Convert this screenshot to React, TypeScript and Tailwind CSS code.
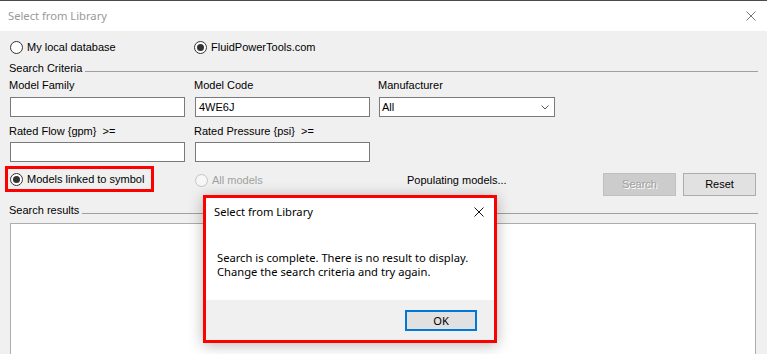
import React from "react";

const Radio = ({ checked, disabled }: { checked?: boolean; disabled?: boolean }) => (
  <span
    className={`shrink-0 w-[13px] h-[13px] rounded-full border flex items-center justify-center ${
      disabled ? "border-[#c4c4c4] bg-[#f7f7f7]" : "border-[#333333] bg-white"
    }`}
  >
    {checked && <span className="w-[7px] h-[7px] rounded-full bg-[#333333]" />}
  </span>
);

const XIcon = ({ color }: { color: string }) => (
  <svg width="10" height="10" viewBox="0 0 10 10" className="shrink-0">
    <path d="M0.5 0.5 L9.5 9.5 M9.5 0.5 L0.5 9.5" stroke={color} strokeWidth="1" fill="none" />
  </svg>
);

export default function App() {
  return (
    <div className="w-[767px] h-[354px] overflow-hidden relative bg-[#f0f0f0] font-['Liberation_Sans',Arial,sans-serif] text-[11px] leading-[13px] text-black flex flex-col">
      {/* Title bar */}
      <div className="h-[31px] shrink-0 bg-white border-t border-[#4a4a4a] flex items-center justify-between pl-[8px] pr-[11px]">
        <span className="font-['Noto_Sans',sans-serif] text-[11.2px] leading-[16px] text-[#999999]">
          Select from Library
        </span>
        <XIcon color="#777777" />
      </div>

      <div className="flex-1 flex flex-col pl-[10px] pr-[11px]">
        {/* Source radios */}
        <div className="mt-[9px] h-[14px] flex items-center">
          <div className="w-[184px] flex items-center gap-[4px]">
            <Radio />
            <span>My local database</span>
          </div>
          <div className="flex items-center gap-[4px]">
            <Radio checked />
            <span>FluidPowerTools.com</span>
          </div>
        </div>

        {/* Search criteria header */}
        <div className="mt-[8px] h-[13px] flex items-start">
          <span className="ml-[-1px]">Search Criteria</span>
          <div className="flex-1 h-px bg-[#a0a0a0] mt-[9px] ml-[3px] mr-[-2px]" />
        </div>

        {/* Labels row 1 */}
        <div className="mt-[4px] h-[13px] flex">
          <span className="w-[185px] ml-[-1px]">Model Family</span>
          <span className="w-[184px]">Model Code</span>
          <span>Manufacturer</span>
        </div>

        {/* Inputs row 1 */}
        <div className="mt-[5px] flex">
          <div className="w-[175px] h-[20px] bg-white border border-[#7a7a7a]" />
          <div className="ml-[10px] w-[175px] h-[20px] bg-white border border-[#7a7a7a] flex items-center pl-[3px]">
            4WE6J
          </div>
          <div className="ml-[9px] w-[176px] h-[20px] bg-white border border-[#7a7a7a] flex items-center justify-between pl-[2px] pr-[5px]">
            <span>All</span>
            <svg width="8" height="5" viewBox="0 0 8 5">
              <path d="M0.5 0.5 L4 4 L7.5 0.5" stroke="#555555" strokeWidth="1" fill="none" />
            </svg>
          </div>
        </div>

        {/* Labels row 2 */}
        <div className="mt-[8px] h-[13px] flex">
          <span className="w-[185px] ml-[-1px] whitespace-pre">Rated Flow {"{gpm}"}  &gt;=</span>
          <span className="w-[184px] whitespace-pre">Rated Pressure {"{psi}"}  &gt;=</span>
        </div>

        {/* Inputs row 2 */}
        <div className="mt-[4px] flex">
          <div className="w-[175px] h-[20px] bg-white border border-[#7a7a7a]" />
          <div className="ml-[10px] w-[175px] h-[20px] bg-white border border-[#7a7a7a]" />
        </div>

        {/* Action row */}
        <div className="mt-[4px] h-[30px] flex items-start">
          <div className="ml-[-5px] w-[149px] h-[26px] shrink-0 border-[3px] border-[#ff0000] flex items-center pl-[2px] gap-[4px]">
            <Radio checked />
            <span>Models linked to symbol</span>
          </div>
          <div className="ml-[41px] w-[212px] shrink-0 mt-[7px] h-[14px] flex items-center gap-[4px] text-[#a0a0a0]">
            <Radio disabled />
            <span>All models</span>
          </div>
          <span className="w-[196px] shrink-0 mt-[8px]">Populating models...</span>
          <div className="mt-[7px] w-[73px] h-[23px] shrink-0 bg-[#cccccc] border border-[#bfbfbf] text-[#a0a0a0] flex items-center justify-center [text-shadow:1px_1px_0_#ffffff]">
            Search
          </div>
          <div className="mt-[7px] ml-[7px] w-[73px] h-[23px] shrink-0 bg-[#e1e1e1] border border-[#adadad] flex items-center justify-center">
            Reset
          </div>
        </div>

        {/* Search results header */}
        <div className="mt-[8px] h-[13px] flex items-start">
          <span className="ml-[-1px]">Search results</span>
          <div className="flex-1 h-px bg-[#a0a0a0] mt-[9px] ml-[3px] mr-[-2px]" />
        </div>

        <div className="mt-[6px] h-[200px] shrink-0 bg-white border border-[#adadad]" />
      </div>

      {/* Message dialog */}
      <div className="absolute left-[203px] top-[195px] w-[294px] h-[148px] border-[3px] border-[#ff0000] bg-white flex flex-col shadow-[0_2px_14px_rgba(0,0,0,0.28)] font-['Noto_Sans',sans-serif] text-[11.2px] leading-[16px] text-black">
        <div className="mt-[6px] h-[16px] flex items-center justify-between pl-[8px] pr-[10px]">
          <span>Select from Library</span>
          <XIcon color="#111111" />
        </div>
        <div className="mt-[31px] pl-[11px] leading-[13.5px]">
          <div>Search is complete. There is no result to display.</div>
          <div>Change the search criteria and try again.</div>
        </div>
        <div className="mt-auto h-[40px] bg-[#f0f0f0] flex justify-end items-start pt-[10px] pr-[17px]">
          <div className="w-[72px] h-[21px] border-2 border-[#0078d7] bg-[#e1e1e1] flex items-center justify-center">
            OK
          </div>
        </div>
      </div>
    </div>
  );
}
